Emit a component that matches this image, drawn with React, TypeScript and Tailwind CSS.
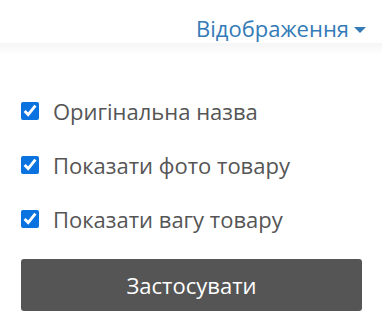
import React, { useState } from 'react';

const options = [
  { id: 'orig', label: 'Оригінальна назва' },
  { id: 'photo', label: 'Показати фото товару' },
  { id: 'weight', label: 'Показати вагу товару' },
];

export default function App() {
  const [checked, setChecked] = useState<Record<string, boolean>>({ orig: true, photo: true, weight: true });

  return (
    <div className="w-[382px] h-[329px] bg-white text-[#555] font-['Open_Sans',sans-serif]">
      <div className="h-[43px] flex items-end justify-end pr-[16px]">
        <button className="flex items-center text-[22px] leading-[28px] text-[#337ab7] mb-[1px]">
          Відображення
          <span className="ml-[5px] mt-[3px] w-0 h-0 border-l-[6px] border-r-[6px] border-t-[6px] border-l-transparent border-r-transparent border-t-[#337ab7]" />
        </button>
      </div>
      <div className="h-[12px] bg-gradient-to-b from-[#f5f5f5] to-white" />
      <div className="px-[21px] pt-[42px]">
        <div className="flex flex-col gap-[26px]">
          {options.map(o => (
            <label key={o.id} className="flex items-center h-[28px] text-[22px] leading-[28px] cursor-pointer">
              <input
                type="checkbox"
                checked={checked[o.id]}
                onChange={() => setChecked({ ...checked, [o.id]: !checked[o.id] })}
                className="w-[18px] h-[18px] accent-[#0b73e0] m-0 mr-[14px]"
              />
              {o.label}
            </label>
          ))}
        </div>
        <button className="mt-[26px] w-[341px] h-[52px] rounded-[3px] bg-[#555] text-white text-[22px]">
          Застосувати
        </button>
      </div>
    </div>
  );
}
